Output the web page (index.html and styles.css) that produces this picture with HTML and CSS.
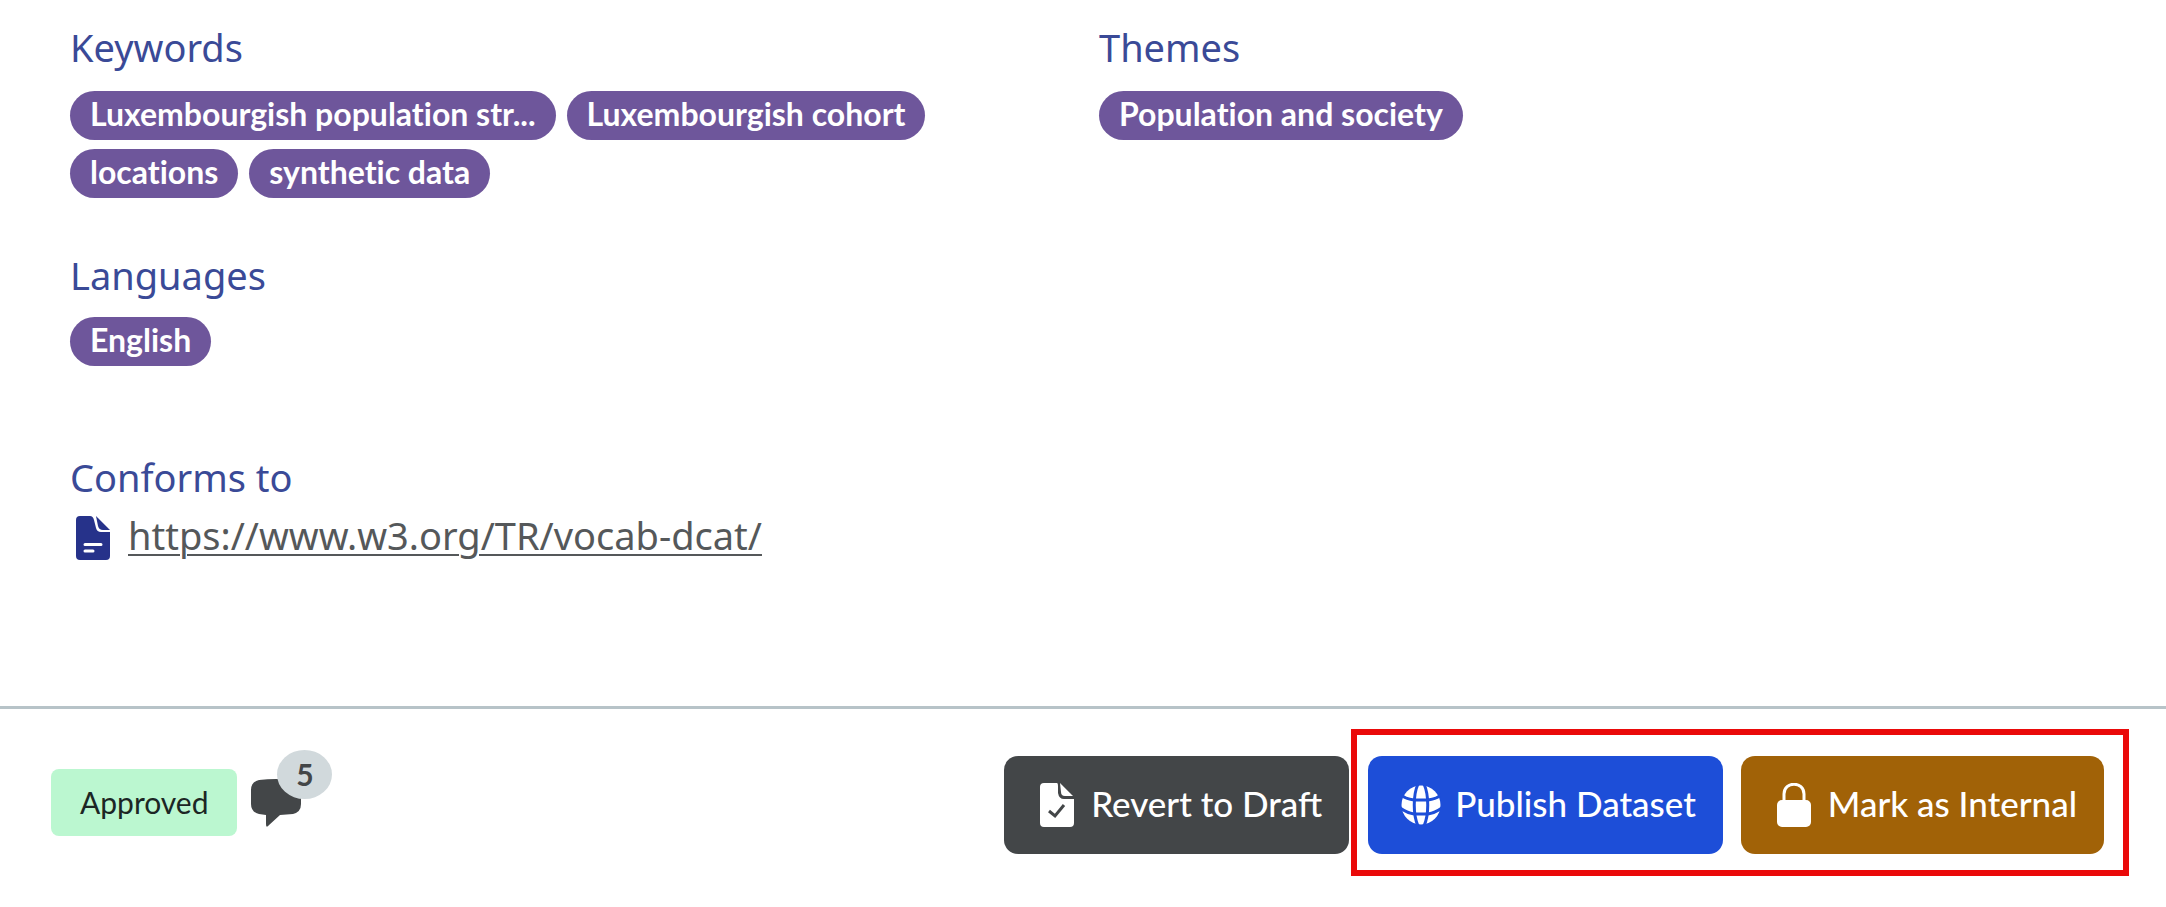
FILE: index.html
```html
<!DOCTYPE html>
<html lang="en">
<head>
<meta charset="utf-8">
<meta name="viewport" content="width=device-width, initial-scale=1">
<title>Dataset</title>
<link rel="stylesheet" href="styles.css">
</head>
<body>
<main class="details">
  <section>
    <h2 class="heading">Keywords</h2>
    <ul class="chips">
      <li class="chip">Luxembourgish population str...</li>
      <li class="chip">Luxembourgish cohort</li>
      <li class="chip">locations</li>
      <li class="chip">synthetic data</li>
    </ul>
  </section>
  <section>
    <h2 class="heading">Themes</h2>
    <ul class="chips">
      <li class="chip">Population and society</li>
    </ul>
  </section>
  <section class="languages">
    <h2 class="heading">Languages</h2>
    <ul class="chips">
      <li class="chip">English</li>
    </ul>
  </section>
  <section class="conforms">
    <h2 class="heading">Conforms to</h2>
    <div class="standard">
      <svg class="standard-icon" viewBox="0 0 34 44" aria-hidden="true">
        <path fill="currentColor" d="M4 0H14Q17 0 18 4L20 12Q21 16 25 16H34V40Q34 44 30 44H4Q0 44 0 40V4Q0 0 4 0ZM20 0L34 14H27Q23 14 22 10Z"/>
        <path fill="none" stroke="#fff" stroke-width="3" stroke-linecap="round" d="M9 28.500H25M9 35H17"/>
      </svg>
      <a class="standard-link" href="https://www.w3.org/TR/vocab-dcat/">https://www.w3.org/TR/vocab-dcat/</a>
    </div>
  </section>
</main>
<footer class="bar">
  <div class="state">
    <span class="status">Approved</span>
    <button class="comments" type="button" aria-label="Comments">
      <svg class="comments-icon" viewBox="0 0 52 50" aria-hidden="true">
        <path fill="currentColor" d="M9 2Q26 0 43 2Q51 4 51 13V26Q51 34 43 36L30 37L18 48Q16 50 16 46V37L9 36Q1 34 1 26V12Q1 4 9 2Z"/>
      </svg>
      <span class="count">5</span>
    </button>
  </div>
  <div class="actions">
    <button class="button button-revert" type="button">
      <svg class="button-icon" viewBox="0 0 40 44" aria-hidden="true">
        <path fill="currentColor" d="M7 0H20Q21 0 21 3V10Q22 16 27 16H37V40Q37 44 33 44H7Q3 44 3 40V4Q3 0 7 0ZM23 0L36 13H28Q24 13 24 9Z"/>
        <path fill="none" stroke="#434648" stroke-width="3" d="M12 28L18 33L27 22"/>
      </svg>
      <span class="button-label">Revert to Draft</span>
    </button>
    <div class="highlight">
      <button class="button button-publish" type="button">
        <svg class="button-icon" viewBox="0 0 40 44" aria-hidden="true">
          <circle cx="20" cy="22" r="19.500" fill="currentColor"/>
          <g fill="none" stroke="#1d4ed8" stroke-width="3">
            <path d="M17 1C12 12 12 32 17 43M23 1C28 12 28 32 23 43"/>
            <path d="M-1 11Q4 16 13 17H27Q36 16 41 11M-1 25Q6 30 13 31H27Q34 30 41 25"/>
          </g>
        </svg>
        <span class="button-label">Publish Dataset</span>
      </button>
      <button class="button button-internal" type="button">
        <svg class="button-icon" viewBox="0 0 40 44" aria-hidden="true">
          <rect x="3" y="17" width="34" height="27" rx="5" fill="currentColor"/>
          <path fill="none" stroke="currentColor" stroke-width="3" d="M10 18V11C10 -2 30 -2 30 11V18"/>
        </svg>
        <span class="button-label">Mark as Internal</span>
      </button>
    </div>
  </div>
</footer>
</body>
</html>
```
FILE: styles.css
```css
* {
  box-sizing: border-box;
}

body {
  display: flex;
  flex-direction: column;
  min-height: 100vh;
  margin: 0;
  background: #fff;
  color: #434648;
  font-family: Lato, "Open Sans", sans-serif;
  font-variant-ligatures: none;
}

.details {
  flex: 1;
  display: grid;
  grid-template-columns: 1fr 1fr;
  align-content: start;
  column-gap: 32px;
  padding: 23px 70px 40px;
}

.languages,
.conforms {
  grid-column: 1 / -1;
}

.languages {
  margin-top: 53px;
}

.conforms {
  margin-top: 87px;
}

.heading {
  margin: 0;
  color: #3a4a97;
  font-family: "Noto Sans", sans-serif;
  font-size: 38px;
  font-weight: 400;
  line-height: 48px;
}

.chips {
  display: flex;
  flex-wrap: wrap;
  gap: 9px 11px;
  margin: 20px 0 0;
  padding: 0;
  list-style: none;
}

.languages .chips {
  margin-top: 18px;
}

.chip {
  padding: 0 20px 4px;
  border-radius: 25px;
  background: #6e569b;
  color: #fff;
  font-size: 32px;
  font-weight: 700;
  line-height: 45px;
}

.standard {
  display: flex;
  align-items: center;
  gap: 18px;
  margin-top: 9px;
  padding-left: 6px;
}

.standard-icon {
  width: 34px;
  height: 44px;
  margin-top: 6px;
  color: #26328a;
}

.standard-link {
  color: #55585a;
  font-family: "Noto Sans", sans-serif;
  font-size: 38px;
  line-height: 48px;
  text-decoration-thickness: 2px;
  text-underline-offset: 4px;
}

.bar {
  display: flex;
  align-items: center;
  justify-content: space-between;
  padding: 20px 37px 31px 51px;
  border-top: 3px solid #b7c3c8;
}

.state,
.actions,
.highlight {
  display: flex;
}

.state {
  align-items: center;
  gap: 13px;
}

.status {
  padding: 0 29px;
  border-radius: 8px;
  background: #bbf7d0;
  color: #1c2624;
  font-size: 30px;
  line-height: 67px;
}

.comments {
  position: relative;
  padding: 0;
  border: 0;
  background: none;
  color: #434648;
  font-family: inherit;
}

.comments-icon {
  display: block;
  width: 52px;
  height: 50px;
}

.count {
  position: absolute;
  top: -28px;
  left: 27px;
  width: 55px;
  border-radius: 50%;
  background: #d1d9dc;
  font-size: 30px;
  font-weight: 700;
  line-height: 49px;
  text-align: center;
}

.actions {
  align-items: flex-end;
  gap: 2px;
}

.highlight {
  gap: 18px;
  padding: 21px 19px 16px 11px;
  border: 6px solid #ea0a0a;
}

.button {
  display: flex;
  align-items: center;
  gap: 14px;
  padding: 27px 27px 27px 33px;
  border: 0;
  border-radius: 14px;
  color: #fff;
  font-family: inherit;
  font-size: 35px;
  font-weight: 500;
  line-height: 40px;
}

.button-label {
  padding-bottom: 4px;
}

.button-icon {
  width: 40px;
  height: 44px;
}

.button-revert {
  margin-bottom: 22px;
  background: #434648;
}

.button-publish {
  background: #1d4ed8;
}

.button-internal {
  background: #a16207;
}
```
